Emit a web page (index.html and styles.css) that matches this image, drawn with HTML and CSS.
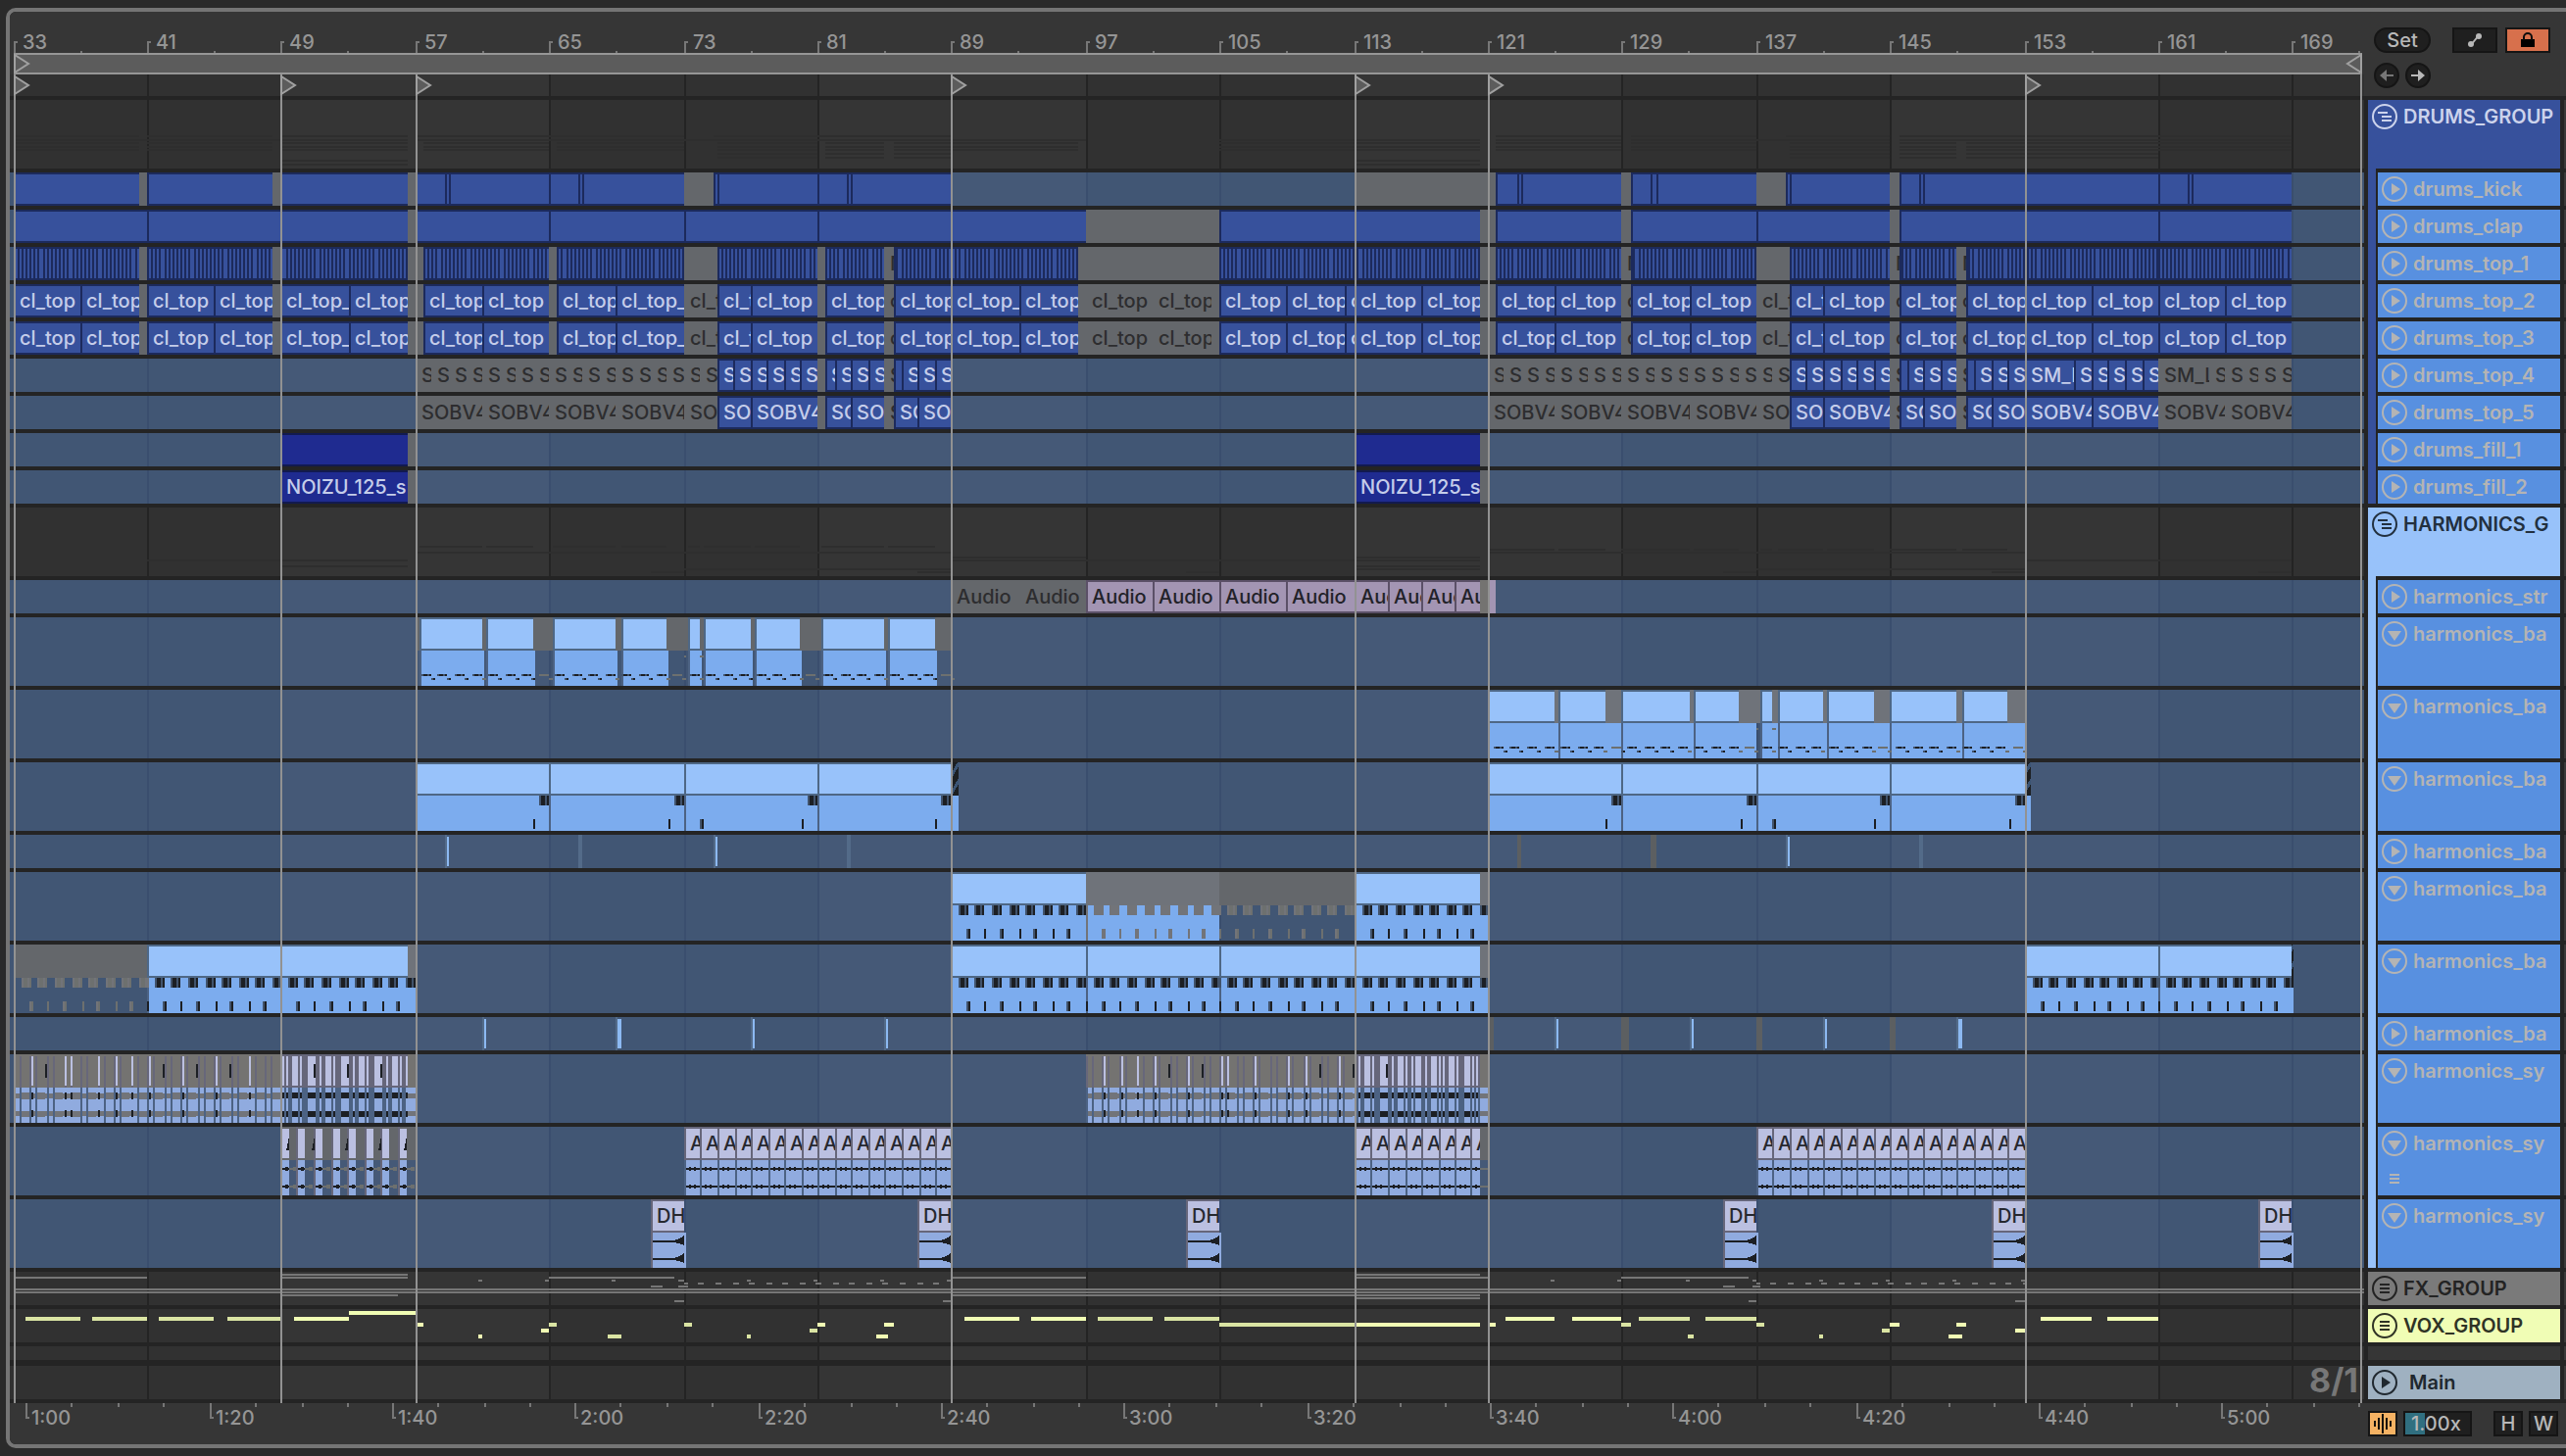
FILE: index.html
```html
<!DOCTYPE html>
<html lang="en">
<head>
<meta charset="utf-8">
<title>Arrangement</title>
<link rel="stylesheet" href="styles.css">
</head>
<body>
<svg class="symbols" aria-hidden="true">
  <symbol id="i-play" viewBox="0 0 26 26"><circle cx="13" cy="13" r="12" fill="none" stroke="currentColor" stroke-width="2"/><path d="M10 7v12l9-6z" fill="currentColor"/></symbol>
  <symbol id="i-down" viewBox="0 0 26 26"><circle cx="13" cy="13" r="12" fill="none" stroke="currentColor" stroke-width="2"/><path d="M6 10h14l-7 10z" fill="currentColor"/></symbol>
  <symbol id="i-group" viewBox="0 0 26 26"><circle cx="13" cy="13" r="12" fill="none" stroke="currentColor" stroke-width="2"/><path d="M6 9h10M10 13h10M10 17h10" fill="none" stroke="currentColor" stroke-width="2"/></symbol>
  <symbol id="i-list" viewBox="0 0 26 26"><circle cx="13" cy="13" r="12" fill="none" stroke="currentColor" stroke-width="2"/><path d="M8 9h10M8 13h10M8 17h10" fill="none" stroke="currentColor" stroke-width="2"/></symbol>
</svg>
<main class="panel">
  <div class="stage">
    <header class="top row">
      <div class="timeline">
        <div class="bar-ruler" id="bar-ruler"></div>
        <div class="loop"></div>
        <div class="cues lane" data-lane="cues"></div>
      </div>
      <div class="controls">
        <div class="control-line">
          <button class="pill">Set</button>
          <button class="square automation" aria-label="Automation mode"><svg width="24" height="16" viewBox="0 0 24 16"><path d="M8 13L16 3" stroke="currentColor" stroke-width="2"/><circle cx="8" cy="12" r="3" fill="currentColor"/><circle cx="16" cy="4" r="3" fill="currentColor"/></svg></button>
          <button class="square lock" aria-label="Lock envelopes"><svg width="16" height="16" viewBox="0 0 16 16"><path d="M1 7h14v8H1z"/><path d="M4 8V5a4 4 0 0 1 8 0v3" fill="none" stroke="currentColor" stroke-width="2"/></svg></button>
        </div>
        <div class="control-line arrows">
          <button class="round off" aria-label="Previous locator"><svg width="16" height="12" viewBox="0 0 16 12"><path d="M15 6H4" stroke="currentColor" stroke-width="2"/><path d="M8 0v12L1 6z" fill="currentColor"/></svg></button>
          <button class="round" aria-label="Next locator"><svg width="16" height="12" viewBox="0 0 16 12"><path d="M1 6h11" stroke="currentColor" stroke-width="2"/><path d="M8 0v12l7-6z" fill="currentColor"/></svg></button>
        </div>
      </div>
    </header>
    <section class="tracks">
      <div class="row tall"><div class="lane" data-lane="drums"></div><div class="head drums"><button class="fold" aria-label="Unfold"><svg><use href="#i-group"/></svg></button><span>DRUMS_GROUP</span></div><i class="edge"></i></div>
      <div class="row"><div class="lane audio" data-lane="kick"></div><div class="head child in-drums"><button class="fold" aria-label="Unfold"><svg><use href="#i-play"/></svg></button><span>drums_kick</span></div><i class="edge"></i></div>
      <div class="row"><div class="lane audio" data-lane="clap"></div><div class="head child in-drums"><button class="fold" aria-label="Unfold"><svg><use href="#i-play"/></svg></button><span>drums_clap</span></div><i class="edge"></i></div>
      <div class="row"><div class="lane audio" data-lane="top1"></div><div class="head child in-drums"><button class="fold" aria-label="Unfold"><svg><use href="#i-play"/></svg></button><span>drums_top_1</span></div><i class="edge"></i></div>
      <div class="row"><div class="lane audio" data-lane="top2"></div><div class="head child in-drums"><button class="fold" aria-label="Unfold"><svg><use href="#i-play"/></svg></button><span>drums_top_2</span></div><i class="edge"></i></div>
      <div class="row"><div class="lane audio" data-lane="top3"></div><div class="head child in-drums"><button class="fold" aria-label="Unfold"><svg><use href="#i-play"/></svg></button><span>drums_top_3</span></div><i class="edge"></i></div>
      <div class="row"><div class="lane audio" data-lane="top4"></div><div class="head child in-drums"><button class="fold" aria-label="Unfold"><svg><use href="#i-play"/></svg></button><span>drums_top_4</span></div><i class="edge"></i></div>
      <div class="row"><div class="lane audio" data-lane="top5"></div><div class="head child in-drums"><button class="fold" aria-label="Unfold"><svg><use href="#i-play"/></svg></button><span>drums_top_5</span></div><i class="edge"></i></div>
      <div class="row"><div class="lane audio" data-lane="fill1"></div><div class="head child in-drums"><button class="fold" aria-label="Unfold"><svg><use href="#i-play"/></svg></button><span>drums_fill_1</span></div><i class="edge"></i></div>
      <div class="row"><div class="lane audio" data-lane="fill2"></div><div class="head child in-drums last"><button class="fold" aria-label="Unfold"><svg><use href="#i-play"/></svg></button><span>drums_fill_2</span></div><i class="edge"></i></div>
      <div class="row tall"><div class="lane" data-lane="harmonics"></div><div class="head harmonics"><button class="fold" aria-label="Unfold"><svg><use href="#i-group"/></svg></button><span>HARMONICS_G</span></div><i class="edge"></i></div>
      <div class="row"><div class="lane audio" data-lane="str"></div><div class="head child in-harmonics"><button class="fold" aria-label="Unfold"><svg><use href="#i-play"/></svg></button><span>harmonics_str</span></div><i class="edge"></i></div>
      <div class="row tall"><div class="lane audio" data-lane="ba1"></div><div class="head child in-harmonics"><button class="fold" aria-label="Fold"><svg><use href="#i-down"/></svg></button><span>harmonics_ba</span></div><i class="edge"></i></div>
      <div class="row tall"><div class="lane audio" data-lane="ba2"></div><div class="head child in-harmonics"><button class="fold" aria-label="Fold"><svg><use href="#i-down"/></svg></button><span>harmonics_ba</span></div><i class="edge"></i></div>
      <div class="row tall"><div class="lane audio" data-lane="ba3"></div><div class="head child in-harmonics"><button class="fold" aria-label="Fold"><svg><use href="#i-down"/></svg></button><span>harmonics_ba</span></div><i class="edge"></i></div>
      <div class="row"><div class="lane audio" data-lane="ba4"></div><div class="head child in-harmonics"><button class="fold" aria-label="Unfold"><svg><use href="#i-play"/></svg></button><span>harmonics_ba</span></div><i class="edge"></i></div>
      <div class="row tall"><div class="lane audio" data-lane="ba5"></div><div class="head child in-harmonics"><button class="fold" aria-label="Fold"><svg><use href="#i-down"/></svg></button><span>harmonics_ba</span></div><i class="edge"></i></div>
      <div class="row tall"><div class="lane audio" data-lane="ba6"></div><div class="head child in-harmonics"><button class="fold" aria-label="Fold"><svg><use href="#i-down"/></svg></button><span>harmonics_ba</span></div><i class="edge"></i></div>
      <div class="row"><div class="lane audio" data-lane="ba7"></div><div class="head child in-harmonics"><button class="fold" aria-label="Unfold"><svg><use href="#i-play"/></svg></button><span>harmonics_ba</span></div><i class="edge"></i></div>
      <div class="row tall"><div class="lane audio" data-lane="sy1"></div><div class="head child in-harmonics"><button class="fold" aria-label="Fold"><svg><use href="#i-down"/></svg></button><span>harmonics_sy</span></div><i class="edge"></i></div>
      <div class="row tall"><div class="lane audio" data-lane="sy2"></div><div class="head child in-harmonics"><button class="fold" aria-label="Fold"><svg><use href="#i-down"/></svg></button><span>harmonics_sy</span><svg class="take-lanes" width="26" height="10" viewBox="0 0 26 10"><path d="M8 1h10M8 5h10M8 9h10" stroke="currentColor" stroke-width="2"/></svg></div><i class="edge"></i></div>
      <div class="row tall"><div class="lane audio" data-lane="sy3"></div><div class="head child in-harmonics last"><button class="fold" aria-label="Fold"><svg><use href="#i-down"/></svg></button><span>harmonics_sy</span></div><i class="edge"></i></div>
      <div class="row"><div class="lane" data-lane="fx"></div><div class="head fx"><button class="fold" aria-label="Unfold"><svg><use href="#i-list"/></svg></button><span>FX_GROUP</span></div><i class="edge"></i></div>
      <div class="row"><div class="lane" data-lane="vox"></div><div class="head vox"><button class="fold" aria-label="Unfold"><svg><use href="#i-list"/></svg></button><span>VOX_GROUP</span></div><i class="edge"></i></div>
      <div class="row short"><div class="lane" data-lane="empty"></div><div class="head blank"></div><i class="edge"></i></div>
      <div class="row main-row"><div class="lane" data-lane="main"><span class="zoom-level">8/1</span></div><div class="head master"><button class="fold" aria-label="Unfold"><svg><use href="#i-play"/></svg></button><span>Main</span></div><i class="edge"></i></div>
    </section>
    <div class="locators" id="locators"></div>
  </div>
  <footer class="row bottom">
    <div class="time-ruler" id="time-ruler"></div>
    <div class="transport">
      <button class="mini wave" aria-label="Warp"><svg width="22" height="22" viewBox="0 0 22 22"><path d="M3 8v6M7 5v12M11 1v20M15 5v12M19 8v6" stroke="currentColor" stroke-width="2"/></svg></button>
      <input class="speed" type="text" value="1.00x" aria-label="Playback speed">
      <button class="mini push">H</button>
      <button class="mini">W</button>
    </div>
  </footer>
</main>
<script src="arrangement.js"></script>
</body>
</html>
```
FILE: styles.css
```css
* { box-sizing: border-box; }
body { margin: 0; padding: 8px 0 8px 6px; background: #2a2a2a; color: #999; font: 500 20px/24px Inter, "Liberation Sans", sans-serif; }
button, input { font: inherit; margin: 0; padding: 0; }
.symbols { position: absolute; width: 0; height: 0; }

.panel { border: 4px solid #757575; border-right: 0; border-radius: 10px 0 0 10px; background: #242424; overflow: hidden; }
.stage { position: relative; }
.row { display: grid; grid-template-columns: minmax(0, 1fr) 196px 2px; column-gap: 4px; height: 34px; }
.tall { height: 70px; }
.short { height: 14px; }
.main-row { margin-top: 2px; }
.tracks { display: flex; flex-direction: column; gap: 4px; padding: 4px 0; }
.edge { background: #393939; }

/* ruler and loop brace */
.top { height: auto; background: #363636; }
.timeline { display: flex; flex-direction: column; }
.bar-ruler, .time-ruler { position: relative; height: 42px; color: #959595; }
.bar-ruler .strip { padding-top: 19px; }
.time-ruler .strip { padding-top: 3px; }
.mark { overflow: visible; white-space: nowrap; text-indent: 9px; }
.time-ruler .mark { text-indent: 6px; }
.tick { fill: #777; }
.loop { height: 22px; margin-left: 4px; margin-right: 2px; background: #5c5c5c; border: solid #969696; border-width: 2px 0; }
.cues { height: 22px; }
.controls { display: flex; flex-direction: column; gap: 10px; padding: 16px 10px 0 6px; }
.control-line { display: flex; gap: 8px; }
.arrows { gap: 6px; }
.pill, .round, .square, .mini, .speed { height: 26px; border: 2px solid #151515; background: #1f1f1f; color: #b8b8b8; line-height: 22px; display: flex; align-items: center; justify-content: center; }
.pill { width: 58px; border-radius: 13px; margin-right: 14px; }
.round { width: 26px; border-radius: 50%; }
.off { color: #777; }
.square { width: 46px; }
.lock { background: #d7704c; color: #0c0c0c; }

/* lanes */
.lane { position: relative; height: 100%; background: #313131; overflow: hidden; --line: #242424; }
.cues.lane { height: 22px; }
.audio { background: #415674; --line: #3a4e6e; }
.art { position: absolute; inset: 0; width: 100%; height: 100%; shape-rendering: crispEdges; }
.band { fill: #fff; opacity: .022; }
.bar { fill: var(--line); }
.strip { position: relative; display: flex; }
.strip > * { flex: 0 0 0; min-width: 0; }
.clip { height: 34px; line-height: 34px; overflow: hidden; white-space: nowrap; text-indent: 6px; color: #c5cdea; box-shadow: inset 2px 0 var(--edge), inset 0 2px var(--edge), inset 0 -2px var(--edge); }
.b { background: #37519c; --edge: #1c2a5c; }
.n { background: #1f2b90; --edge: #121a50; }
.g { background: #64676b; box-shadow: none; color: #2d2d2f; }
.m { background: #6f737a; box-shadow: none; }
.w { background: #747371; box-shadow: none; }
.p { background: #a395b3; --edge: #5b5067; color: #222228; }
.q { background: #a395b3; box-shadow: none; }
.h { background: #98c2fa; --edge: #4e6785; }
.l { background: #bbc0e1; --edge: #66667a; color: #26282f; }
.s { background: #66667a; box-shadow: none; }
.x { background: repeating-linear-gradient(-60deg, #1c1f22 0 6px, #3b5474 6px 9px); box-shadow: none; }
.stripe { fill: #1c2a5c; }
.faint { fill: #2e2e2e; }
.body { fill: #7cacee; }
.wavebody { fill: #90abdf; }
.divide { fill: #4c6283; }
.dark { fill: #1c1f24; }
.dim { fill: #41536c; }
.ghost { fill: #6d706f; }
.grey { fill: #727479; }
.pale { fill: #bbc0e1; }
.haze { fill: #67677a; }
.bright { fill: #8cb9f2; }
.soft { fill: #536b89; }
.fade { fill: #5c5f61; }
.fxline { fill: #767676; }
.voxnote { fill: #f1fdb4; }
.voxdim { fill: #dae4a3; }
.zoom-level { position: absolute; right: 6px; top: 0; font-size: 34px; font-weight: 700; line-height: 30px; color: #777; }

/* track headers */
.head { display: flex; flex-wrap: wrap; align-content: flex-start; align-items: center; column-gap: 6px; padding: 4px 0 0 4px; overflow: hidden; white-space: nowrap; line-height: 26px; }
.fold { width: 26px; height: 26px; border: 0; background: none; color: inherit; }
.fold svg { display: block; width: 26px; height: 26px; }
.drums { background: #37519c; color: #ccd3ec; font-weight: 600; }
.harmonics { background: #98c2fa; color: #22303f; font-weight: 600; }
.child { background: #5890e0; color: #b4b4b4; border-left: 2px solid #242424; margin-left: 8px; font-weight: 600; }
.in-drums, .in-harmonics { position: relative; overflow: visible; }
.in-drums::before, .in-harmonics::before { content: ""; position: absolute; left: -10px; top: -4px; bottom: 0; width: 8px; background: #37519c; }
.in-harmonics::before { background: #98c2fa; }
.fx { background: #7a7a7a; color: #232323; font-weight: 600; }
.vox { background: #f0fdb5; color: #2f3325; font-weight: 600; }
.blank { background: #363636; }
.master { background: #9fb1c1; color: #20282f; column-gap: 12px; font-weight: 600; }
.take-lanes { flex: none; margin-top: 18px; }

/* locators */
.locators { position: absolute; inset: 42px 206px 0 0; pointer-events: none; }
.locator { position: absolute; top: 22px; bottom: 0; width: 2px; background: #929292; }
.locator.full { top: 0; }
.locator svg { position: absolute; left: 0; top: 0; overflow: visible; }
.locator.full .flag { top: 22px; }
.locator.end .brace { left: -14px; }
.flag path, .brace path { fill: #5c5c5c; stroke: #a0a0a0; stroke-width: 2; }

/* time ruler and transport */
.bottom { height: 42px; background: #363636; }
.transport { display: flex; align-items: flex-start; gap: 6px; padding-top: 8px; }
.mini { width: 30px; }
.wave { background: #f5b263; color: #16120c; }
.speed { width: 70px; padding-left: 6px; background: linear-gradient(90deg, #306f80 20px, #1f1f1f 20px); }
.push { margin-left: 16px; }
```
FILE: arrangement.js
```js
// Timeline range shown, in timeline units (one bar is 17.09 units).
const START = 10, END = 2412, SPAN = END - START, BAR = 17.09;
const BARS = [14, 150, 286, 424, 560, 698, 834, 970, 1108, 1244, 1382, 1518, 1654, 1792, 1928, 2066, 2202, 2338];
const BANDS = [[286, 560], [834, 1108], [1382, 1654], [1928, 2202]];
const snap = v => 2 * Math.round((v - 0.2) / 2);
const rect = (a, b, y, h, cls) => `<rect class="${cls}" x="${a}" y="${y}" width="${b - a}" height="${h}"/>`;
const art = (h, inner) => `<svg class="art" viewBox="${START} 0 ${SPAN} ${h}" preserveAspectRatio="none">${inner}</svg>`;

// A clip list reads: position, kind[:label], position, kind[:label], ... position; "-" is empty time.
function parse(spec) {
  const t = spec.trim().split(/\s+/), out = [];
  for (let i = 0; i + 2 < t.length; i += 2) {
    const [kind, label = ''] = t[i + 1].split(':');
    if (kind !== '-') out.push({ a: +t[i], b: +t[i + 2], kind, label });
  }
  return out;
}
function strip(items, cls = 'clip') {
  let pos = START, html = '';
  for (const c of items) {
    if (c.a > pos) html += `<i style="flex-grow:${c.a - pos}"></i>`;
    html += `<span class="${cls} ${c.kind || ''}" style="flex-grow:${c.b - c.a}">${c.label}</span>`;
    pos = c.b;
  }
  if (pos < END) html += `<i style="flex-grow:${END - pos}"></i>`;
  return `<div class="strip">${html}</div>`;
}
function run(from, to, kind) {
  let s = '', n = Math.round((to - from) / BAR);
  for (let k = 0; k < n; k++) s += `${snap(from + k * BAR)} ${kind} `;
  return s;
}

const TOPS = `14 b:cl_top 82 b:cl_top 142 g 150 b:cl_top 218 b:cl_top 278 g 286 b:cl_top_ 356 b:cl_top 416 g 432 b:cl_top 492 b:cl_top 560 g 568
 b:cl_top 628 b:cl_top_ 698 g:cl_top 732 b:cl_top 766 b:cl_top 834 g 842 b:cl_top 902 g:cl 912 b:cl_top 970 b:cl_top_ 1040 b:cl_top 1100 g 1108
 g:cl_top 1176 g:cl_top 1236 g 1244 b:cl_top 1312 b:cl_top 1372 b:cl 1382 b:cl_top 1450 b:cl_top 1510 g 1526 b:cl_top 1586 b:cl_top 1654 g:cl 1664
 b:cl_top 1724 b:cl_top 1792 g:cl_top 1826 b:cl_top 1860 b:cl_top 1928 g:cl 1938 b:cl_top 1996 g:cl 2006 b:cl_top 2066 b:cl_top 2134 b:cl_top 2202
 b:cl_top 2270 b:cl_top 2338`;
const CLIPS = {
  kick: `14 b 142 g 150 b 278 g 286 b 416 g 424 b 454 b 458 b 560 b 590 b 594 b 698 g 728 b 732 b 834 b 864 b 868 b 970 - 1382 g 1526 b 1548 b 1552
   b 1654 g 1664 b 1684 b 1690 b 1792 g 1822 b 1826 b 1928 g 1938 b 1958 b 1962 b 2066 b 2202 b 2232 b 2236 b 2338`,
  clap: `14 b 150 b 286 b 416 g 424 b 560 b 698 b 834 b 970 b 1108 g 1244 b 1382 b 1510 g 1526 b 1654 g 1664 b 1792 b 1928 g 1938 b 2066 b 2202 b 2338`,
  top1: `14 b 142 g 150 b 278 g 286 b 416 g 432 b 560 g 568 b 698 g 732 b 834 g 842 b 902 g:N 912 b 970 b 1100 g 1244 b 1382 b 1510 g 1526 b 1654
   g:N 1664 b 1792 g 1826 b 1928 g:N 1938 b 1996 g:N 2006 b 2066 b 2202 b 2338`,
  top2: TOPS,
  top3: TOPS,
  top4: `${run(424, 732, 'g:S')} 732 b:S 748 b:S 766 b:S 782 b:S 800 b:S 816 b:S 834 g 842 b:S 852 b:S 868 b:S 886 b:S 902 g:S 912 b 920 b:S 936 b:S 954 b:S 970 -
   ${run(1518, 1826, 'g:S')} 1826 b:S 1842 b:S 1860 b:S 1878 b:S 1894 b:S 1912 b:S 1928 g:S 1938 b 1946 b:S 1962 b:S 1980 b:S 1996 g:S 2006 b 2014 b:S 2032
   b:S 2048 b:S 2066 b:SM_L 2116 b:S 2134 b:S 2150 b:S 2168 b:S 2186 b:S 2202 g:SM_L 2254 g:S 2270 g:S 2288 g:S 2304 g:S 2322 g:S 2338`,
  top5: `424 g:SOBV4 492 g:SOBV4 560 g:SOBV4 628 g:SOBV4 698 g:SOBV4 732 b:SOBV4 766 b:SOBV4 834 g 842 b:SOBV4 868 b:SOBV4 902 g:S 912 b:SOBV4 936
   b:SOBV4 970 - 1518 g:SOBV4 1586 g:SOBV4 1654 g:SOBV4 1724 g:SOBV4 1792 g:SOBV4 1826 b:SOBV4 1860 b:SOBV4 1928 g:S 1938 b:SOBV4 1962 b:SOBV4 1996
   g:S 2006 b:SOBV4 2032 b:SOBV4 2066 b:SOBV4 2134 b:SOBV4 2202 g:SOBV4 2270 g:SOBV4 2338`,
  fill1: `286 n 416 g 424 - 1382 n 1510 g 1518`,
  fill2: `286 n:NOIZU_125_s 416 g 424 - 1382 n:NOIZU_125_s 1510 g 1518`,
  str: `970 g:Audio 1040 g:Audio 1108 p:Audio 1176 p:Audio 1244 p:Audio 1312 p:Audio 1382 p:Audio 1416 p:Audio 1450 p:Audio 1484 p:Audio 1510 w 1518 q 1526`,
  ba1: `424 g 428 h 492 g 496 h 544 g 564 h 628 g 634 h 680 g 702 h 714 g 718 h 766 g 770 h 816 g 838 h 902 g 906 h 954 g 970`,
  ba2: `1518 h 1586 m 1590 h 1638 m 1654 h 1724 m 1728 h 1774 m 1796 h 1808 m 1814 h 1860 m 1864 h 1912 m 1928 h 1996 m 2002 h 2048 m 2066`,
  ba3: `424 h 560 h 698 h 834 h 970 x 978 - 1518 h 1654 h 1792 h 1928 h 2066 x 2072`,
  ba5: `970 h 1108 m 1244 g 1382 h 1510 m 1518`,
  ba6: `14 g 150 h 286 h 416 m 424 - 970 h 1108 h 1244 h 1382 h 1510 m 1518 - 2066 h 2202 h 2338 x 2340`,
  sy1: `14 w 286 s 416 w 424 - 1108 w 1382 s 1510 w 1518`,
  sy2: `286 g 424 - ${run(698, 970, 'l:A')} 970 - ${run(1382, 1500, 'l:A')} 1500 l:A 1510 g 1518 - ${run(1792, 2066, 'l:A')} 2066`,
  sy3: `664 l:DH 698 - 936 l:DH 970 - 1210 l:DH 1244 - 1758 l:DH 1792 - 2032 l:DH 2066 - 2304 l:DH 2338`
};

// Bass riff: a chord stab and a low note in every bar.
function riff(a, b, ghost) {
  const d = ghost || 'dark', m = ghost ? 'grey' : 'dim';
  let s = '';
  for (let x = a; x < b - 4; x += BAR) {
    const u = snap(x + 8), lo = snap(x + 1);
    s += rect(lo, lo + 2, 58, 10, d);
    if (Math.round((x - a) / BAR) % 2) s += rect(lo - 2, lo, 58, 10, m);
    if (u + 10 > b + 2) continue;
    s += rect(u, u + 10, 34, 10, m) + rect(u + 2, u + 6, 34, 10, d) + rect(u + 8, Math.min(u + 10, b), 34, 10, d);
  }
  return s;
}
function plucks(a, b, inside) {
  let s = '';
  for (let x = a; x < b - 4; x += BAR) {
    const u = snap(x + 6), w = snap(x + 16), on = inside(u + 4), on2 = inside(w + 2);
    s += rect(u, Math.min(u + 10, b), 58, 2, on ? 'dim' : 'ghost');
    if (on) s += rect(u + 2, u + 6, 58, 2, 'dark') + rect(u + 8, u + 10, 58, 2, 'dark');
    s += rect(w, w + 4, 62, 2, on2 ? 'dim' : 'ghost');
    if (on2) s += rect(w + 2, w + 4, 62, 2, 'dark');
  }
  return s;
}
const wave = (a, b, cls) => rect(a, b, 40, 5, cls) + rect(a, b, 58, 5, cls);
function chops(a, b, bars, stems) {
  let s = rect(a, b, 34, 36, 'wavebody'), g = '';
  for (let x = a; x < b; x += BAR) {
    for (const o of [0, 6]) {
      const u = snap(x + o);
      s += rect(u, u + 2, 2, 32, 'haze');
      g += rect(u, u + 2, 34, 36, 'divide');
    }
    s += rect(snap(x + 8), Math.min(snap(x + 16), b), 39, 7, 'grey') + rect(snap(x + 8), Math.min(snap(x + 16), b), 58, 6, 'grey');
  }
  s += wave(a, b, 'grey') + g;
  for (const x of bars) s += rect(x, x + 2, 2, 30, 'pale') + rect(x, x + 2, 34, 36, 'wavebody') + rect(x, x + 2, 39, 7, 'dark') + rect(x, x + 2, 57, 7, 'dark');
  for (const x of stems) s += rect(x, x + 2, 10, 14, 'dark');
  return s;
}
function stutter(a, b, pairs, stems) {
  let s = rect(a, b, 34, 36, 'divide');
  for (const [x, w] of pairs) s += rect(x, x + w, 2, 30, 'pale') + rect(x, x + w, 34, 36, 'wavebody') + rect(x, x + w, 39, 6, 'dark') + rect(x, x + w, 58, 6, 'dark');
  for (const x of stems) s += rect(x, x + 2, 10, 14, 'dark');
  return s + rect(b - 8, b, 34, 36, 'wavebody') + wave(b - 8, b, 'grey');
}
const thin = (list) => list.map(([x, w, cls]) => cls === 'bright' ? rect(x - 2, x, 0, 34, 'soft') + rect(x, x + w, 2, 30, cls) : rect(x, x + w, 0, 34, cls)).join('');
const rows = (y, h, cls, pairs) => pairs.map(([a, b]) => rect(a, b, y, h, cls)).join('');
const active = name => parse(CLIPS[name] || '').filter(c => 'bnphlsq'.includes(c.kind)).map(c => [c.a, c.b]);

const DETAIL = {
  drums() {
    return [['kick', 36], ['clap', 40], ['top1', 43], ['top2', 47], ['top3', 50], ['top4', 54], ['top5', 58], ['fill1', 61], ['fill2', 65]]
      .map(([n, y]) => rows(y, 2, 'faint', active(n))).join('');
  },
  harmonics() {
    return [['ba1', 39], ['ba2', 42], ['ba3', 45], ['ba5', 50], ['ba6', 53], ['sy1', 59], ['sy2', 62], ['sy3', 65]]
      .map(([n, y]) => rows(y, 2, 'faint', active(n))).join('');
  },
  top1() {
    let s = '';
    for (const [a, b] of active('top1')) for (let k = 0; ; k++) {
      const x = 2 * Math.floor((14.3 + k * BAR / 4) / 2);
      if (x >= b) break;
      if (x >= a) s += rect(x, x + 2, 2, 30, 'stripe');
    }
    return s;
  },
  ba1() {
    const c = active('ba1').map(([a, b]) => [a + 2, b + 2]);
    return rows(34, 36, 'divide', c.map(([a]) => [a - 2, a])) + rows(34, 36, 'body', c) + plucks(424, 970, x => c.some(([a, b]) => x > a && x < b - 1)) +
      rect(698, 700, 39, 2, 'ghost') + rect(714, 718, 39, 2, 'ghost');
  },
  ba2() {
    const c = active('ba2');
    return rows(34, 36, 'body', [[1518, 1792], [1798, 2066]]) + rows(34, 36, 'divide', c.map(([a]) => [a, a + 2])) +
      plucks(1518, 2066, x => c.some(([a, b]) => x > a && x < b)) + rect(1792, 1794, 39, 2, 'ghost') + rect(1808, 1812, 39, 2, 'ghost');
  },
  ba3() {
    let s = rows(34, 36, 'body', [[424, 978], [1518, 2072]]);
    for (const [a, b] of active('ba3')) {
      s += rect(a, a + 2, 34, 36, 'divide') + rect(b - 10, b, 34, 10, 'dim') + rect(b - 8, b - 4, 34, 10, 'dark') + rect(b - 2, b, 34, 10, 'dark') + rect(b - 16, b - 14, 58, 10, 'dark');
      if (a === 698 || a === 1792) s += rect(a + 16, a + 18, 58, 10, 'dim') + rect(a + 18, a + 20, 58, 10, 'dark');
    }
    return s;
  },
  ba4: () => thin([[456, 2, 'bright'], [590, 4, 'soft'], [730, 2, 'bright'], [864, 4, 'soft'], [1548, 4, 'fade'], [1684, 6, 'fade'], [1824, 2, 'bright'], [1958, 4, 'soft']]),
  ba5: () => rows(34, 36, 'body', [[970, 1244], [1382, 1518]]) + rect(1108, 1110, 34, 36, 'grey') + riff(970, 1108) + riff(1108, 1244, 'grey') + riff(1244, 1382, 'ghost') + riff(1382, 1518),
  ba6() {
    const c = [[150, 286], [286, 424], [970, 1108], [1108, 1244], [1244, 1382], [1382, 1518], [2066, 2202], [2202, 2340]];
    return rows(34, 36, 'body', c) + rows(34, 36, 'divide', c.map(([a]) => [a, a + 2])) + riff(14, 150, 'ghost') + c.map(([a, b]) => riff(a, b)).join('');
  },
  ba7: () => thin([[494, 2, 'bright'], [630, 4, 'bright'], [768, 2, 'bright'], [904, 2, 'bright'], [1520, 4, 'fade'], [1588, 2, 'bright'], [1654, 8, 'fade'],
    [1726, 2, 'bright'], [1792, 6, 'fade'], [1862, 2, 'bright'], [1928, 6, 'fade'], [1998, 4, 'bright']]),
  sy1: () => chops(14, 286, [32, 66, 72, 100, 118, 134, 152, 186, 220, 254], [46, 166, 200, 234]) +
    stutter(286, 424, [[288, 2], [292, 2], [298, 6], [306, 2], [314, 8], [326, 2], [332, 6], [340, 2], [348, 8], [360, 2], [366, 6], [374, 2], [382, 8], [394, 2], [400, 6], [408, 2], [414, 2]], [320, 354, 388]) +
    chops(1108, 1382, [1126, 1144, 1160, 1178, 1212, 1246, 1252, 1280, 1314, 1332, 1366], [1192, 1226, 1346, 1380]) +
    stutter(1382, 1518, [[1386, 2], [1392, 6], [1400, 2], [1408, 8], [1420, 2], [1426, 6], [1434, 2], [1440, 2], [1444, 6], [1454, 2], [1460, 6], [1468, 2], [1472, 2], [1478, 6], [1486, 2], [1494, 6], [1502, 2], [1506, 2]], [1414]),
  sy2() {
    let s = '';
    for (let x = 288; x < 420; x += BAR) {
      const a = snap(x), b = a + 7;
      s += rect(a - 2, a, 0, 70, 'haze') + rect(a, b, 2, 30, 'pale') + rect(a, b, 34, 36, 'wavebody');
      for (const y of [42, 60]) s += rect(a, b, y, 2, 'dark') + rect(a + 3, b - 1, y - 1, 4, 'dark') + rect(b, Math.min(b + 8, 424), y, 2, 'ghost') + rect(b + 4, Math.min(b + 8, 424), y - 1, 4, 'ghost');
    }
    for (const x of [292, 318, 352, 386, 412]) s += `<path class="dark" d="M${x} 24l3-14v14z"/>`;
    for (const [a, b] of active('sy2')) {
      s += rect(a, b, 34, 36, 'wavebody') + rect(a, a + 2, 34, 36, 'divide') + rect(a + 2, b, 42, 2, 'dark') + rect(a + 2, b, 60, 2, 'dark');
      for (const y of [41, 59]) s += rect(a + 5, a + 7, y, 4, 'dark') + (b - a > 12 ? rect(a + 10, a + 12, y, 4, 'dark') : '');
    }
    return s + rect(1510, 1518, 42, 2, 'ghost') + rect(1510, 1518, 60, 2, 'ghost');
  },
  sy3() {
    return active('sy3').map(([a, b]) => rect(a, a + 2, 34, 36, 'haze') + rect(a + 2, b + 2, 34, 36, 'wavebody') +
      [43, 61].map(y => `<path class="dark" d="M${a + 2} ${y - 1}h${b - a - 16}q8 0 14-5v10q-6-3-14-3h-${b - a - 16}z"/>`).join('')).join('');
  },
  fx() {
    const dots = [488, 556, 624, 762, 830, 898, 966, 1582, 1650, 1720, 1788, 1856, 1924, 1992, 2062].map(x => [x, x + 4]);
    const dashes = [];
    for (const s of [[698, 970], [1792, 2066]]) for (let x = s[0] - 2; x < s[1]; x += BAR) dashes.push([Math.max(snap(x), s[0]), Math.min(snap(x) + 6, s[1])]);
    return rows(2, 2, 'fxline', [[286, 416], [1382, 1510]]) +
      rows(5, 2, 'fxline', [[14, 150], [286, 416], [560, 688], [970, 1108], [1382, 1518], [1654, 1784]]) +
      rows(8, 2, 'fxline', [...dots, [692, 698]]) + rows(11, 2, 'fxline', dashes) +
      rows(14, 2, 'fxline', [[664, 676], [692, 702], [1758, 1770], [1788, 1796]]) +
      rows(17, 2, 'fxline', [[14, END]]) + rows(20, 2, 'fxline', [[14, END]]) +
      rows(23, 2, 'fxline', [[286, 406], [970, 1510]]) + rows(26, 2, 'fxline', [[1382, 1510]]) +
      rows(29, 2, 'fxline', [[688, 698], [962, 970], [1784, 1792], [2056, 2066]]);
  },
  vox() {
    const notes = {
      2: [[356, 424]],
      8: [[26, 82], [94, 150], [162, 218], [232, 286], [300, 356], [984, 1040], [1052, 1108], [1120, 1176], [1188, 1244], [1536, 1586], [1604, 1654], [1672, 1724], [1740, 1792], [2082, 2134], [2150, 2202]],
      14: [[424, 432], [560, 568], [698, 706], [834, 842], [902, 912], [1244, 1382], [1382, 1510], [1518, 1526], [1654, 1664], [1792, 1800], [1928, 1938], [1996, 2006]],
      20: [[552, 560], [826, 834], [1920, 1928], [2056, 2066]],
      26: [[488, 492], [620, 634], [762, 766], [894, 906], [1722, 1728], [1856, 1860], [1988, 2002]]
    };
    return Object.entries(notes).map(([y, list]) => list.map(([a, b]) =>
      rect(a, b, y, 4, BANDS.some(([s, e]) => a >= s && a < e) ? 'voxnote' : 'voxdim')).join('')).join('');
  }
};

for (const lane of document.querySelectorAll('.lane')) {
  const name = lane.dataset.lane, h = lane.clientHeight;
  let html = art(h, BANDS.map(([a, b]) => rect(a, b, 0, h, 'band')).join('') + BARS.map(x => rect(x, x + 2, 0, h, 'bar')).join(''));
  if (CLIPS[name]) html += strip(parse(CLIPS[name]));
  if (DETAIL[name]) html += art(h, DETAIL[name]());
  lane.insertAdjacentHTML('afterbegin', html);
}

// Bar ruler
const bars = BARS.map((x, i) => ({ a: x, b: BARS[i + 1] || END, label: 33 + i * 8 }));
document.getElementById('bar-ruler').innerHTML =
  art(42, BARS.map(x => rect(x, x + 2, 30, 12, 'tick') + rect(x, x + 4, 30, 2, 'tick') + rect(snap(x + 68.4), snap(x + 68.4) + 2, 40, 2, 'tick')).join('')) + strip(bars, 'mark');

// Time ruler
const STEP = 186.7, times = [];
let marks = '';
for (let i = 0; i < 13; i++) {
  const x = snap(26.6 + i * STEP), sec = 60 + i * 20;
  times.push({ a: x, b: i < 12 ? snap(26.6 + (i + 1) * STEP) : END, label: `${Math.floor(sec / 60)}:${String(sec % 60).padStart(2, '0')}` });
  marks += rect(x, x + 2, 0, 16, 'tick') + rect(x, x + 4, 14, 2, 'tick');
  for (let k = 1; k < 4; k++) marks += rect(snap(x + k * STEP / 4), snap(x + k * STEP / 4) + 2, 0, 4, 'tick');
}
document.getElementById('time-ruler').innerHTML = art(42, marks) + strip(times, 'mark');

// Locators and loop brace ends
const flag = '<svg class="flag" width="16" height="22"><path d="M1 2v18l14-9z"/></svg>';
const at = x => `left:${(x - START) / SPAN * 100}%`;
document.getElementById('locators').innerHTML =
  `<div class="locator full" style="${at(14)}"><svg class="brace" width="16" height="22"><path d="M1 2v18l14-9z"/></svg>${flag}</div>` +
  [286, 424, 970, 1382, 1518, 2066].map(x => `<div class="locator" style="${at(x)}">${flag}</div>`).join('') +
  `<div class="locator full end" style="${at(2408)}"><svg class="brace" width="16" height="22"><path d="M15 2v18L1 11z"/></svg></div>`;
```
